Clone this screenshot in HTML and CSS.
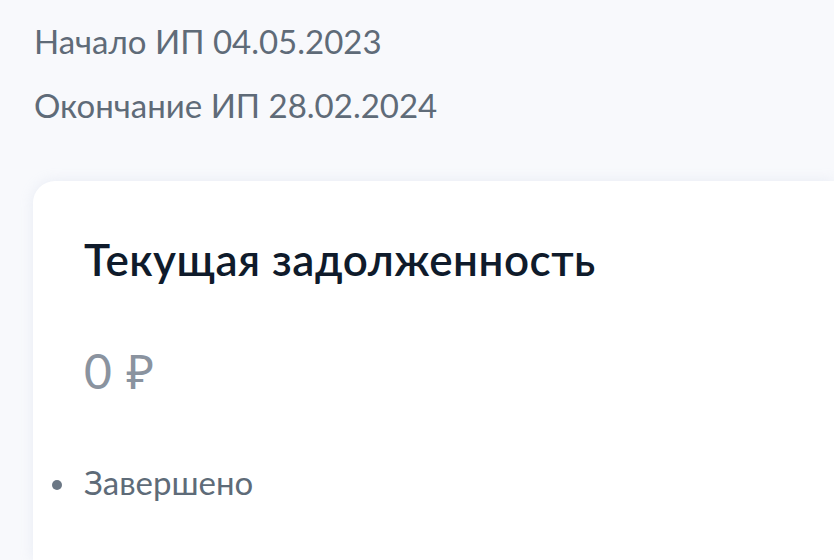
FILE: index.html
```html
<!DOCTYPE html>
<html lang="ru">
<head>
<meta charset="utf-8">
<link rel="stylesheet" href="styles.css">
</head>
<body>
<div class="page">
  <div class="dates">
    <p class="date">Начало ИП 04.05.2023</p>
    <p class="date">Окончание ИП 28.02.2024</p>
  </div>
  <section class="card">
    <h2 class="title">Текущая задолженность</h2>
    <div class="amount">0 ₽</div>
    <div class="status"><span class="dot"></span><span>Завершено</span></div>
  </section>
</div>
</body>
</html>
```
FILE: styles.css
```css
* { box-sizing: border-box; }
html, body { margin: 0; padding: 0; }
body {
  background: #f8f9fc;
  font-family: Lato, "Noto Sans", sans-serif;
  width: 834px;
  height: 560px;
  overflow: hidden;
}
.page {
  padding: 21px 0 0 34px;
}
.dates {
  display: flex;
  flex-direction: column;
  gap: 24px;
}
.date {
  margin: 0;
  font-size: 33px;
  line-height: 40px;
  color: #5f6b78;
}
.card {
  margin-top: 56px;
  margin-left: -1px;
  background: #ffffff;
  border-radius: 22px 0 0 0;
  box-shadow: 0 0 14px rgba(170, 185, 215, 0.2);
  padding: 52px 0 0 51px;
  height: 379px;
}
.title {
  margin: 0;
  font-size: 44px;
  line-height: 52px;
  font-weight: 600;
  color: #0f1b2b;
  letter-spacing: 0.5px;
}
.amount {
  margin-top: 58px;
  font-size: 48px;
  line-height: 56px;
  font-weight: 400;
  color: #8a939f;
  letter-spacing: 1px;
}
.status {
  margin-top: 63px;
  margin-left: -32px;
  display: flex;
  align-items: center;
  gap: 22px;
  font-size: 33px;
  line-height: 40px;
  color: #5e6b78;
}
.dot {
  width: 10px;
  height: 10px;
  margin-top: 6px;
  border-radius: 50%;
  background: #6b7785;
}
```
